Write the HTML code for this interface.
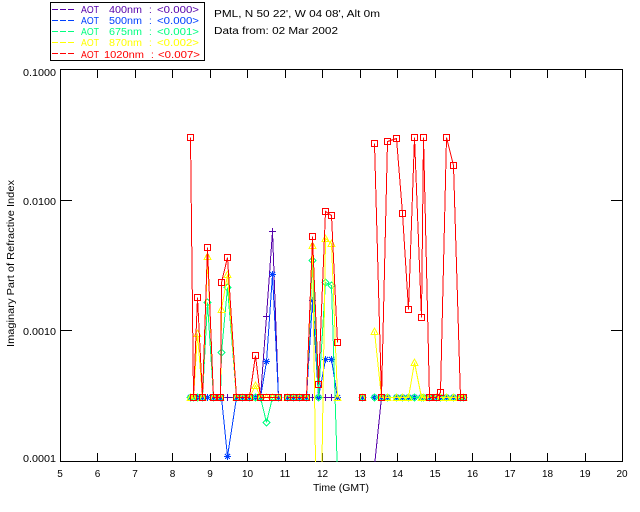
<!DOCTYPE html>
<html>
<head>
<meta charset="utf-8">
<style>
html,body{margin:0;padding:0;background:#fff;width:640px;height:512px;overflow:hidden}
body{position:relative}
svg{display:block;position:absolute;left:0;top:0;overflow:hidden}
text{font-family:"Liberation Sans",sans-serif;font-size:10px;fill:#000}
.x{text-anchor:middle}
.ax{stroke:#000;stroke-width:1;fill:none;shape-rendering:crispEdges}
marker *{shape-rendering:crispEdges}
.s polyline{fill:none;stroke-width:1;shape-rendering:crispEdges}
.p polyline{stroke:#5500aa;marker-start:url(#mp);marker-mid:url(#mp);marker-end:url(#mp)}
.b polyline{stroke:#0040ff;marker-start:url(#mb);marker-mid:url(#mb);marker-end:url(#mb)}
.g polyline{stroke:#00ff80;marker-start:url(#mg);marker-mid:url(#mg);marker-end:url(#mg)}
.y polyline{stroke:#ffff00;marker-start:url(#my);marker-mid:url(#my);marker-end:url(#my)}
.r polyline{stroke:#ff0000;marker-start:url(#mr);marker-mid:url(#mr);marker-end:url(#mr)}
</style>
</head>
<body>
<svg width="640" height="512" viewBox="0 0 640 512" xmlns="http://www.w3.org/2000/svg">
<defs>
<clipPath id="c"><rect x="60" y="69" width="563" height="393"/></clipPath>
<marker id="mp" markerUnits="userSpaceOnUse" markerWidth="12" markerHeight="12" refX="6" refY="6" overflow="visible"><path d="M2.5 6H9.5M6 2.5V9.5" stroke="#5500aa" fill="none"/></marker>
<marker id="mb" markerUnits="userSpaceOnUse" markerWidth="12" markerHeight="12" refX="6" refY="6" overflow="visible"><path d="M2.5 6H9.5M6 2.5V9.5M3.5 3.5L8.5 8.5M8.5 3.5L3.5 8.5" stroke="#0040ff" fill="none"/></marker>
<marker id="mg" markerUnits="userSpaceOnUse" markerWidth="12" markerHeight="12" refX="6" refY="6" overflow="visible"><path d="M6 2.5L9.5 6L6 9.5L2.5 6Z" stroke="#00ff80" fill="none"/></marker>
<marker id="my" markerUnits="userSpaceOnUse" markerWidth="12" markerHeight="12" refX="6" refY="6" overflow="visible"><path d="M6 2.5L9.5 9H2.5Z" stroke="#ffff00" fill="none"/></marker>
<marker id="mr" markerUnits="userSpaceOnUse" markerWidth="12" markerHeight="12" refX="6" refY="6" overflow="visible"><rect x="3" y="3" width="6" height="6" stroke="#ff0000" fill="none"/></marker>
</defs>

<!-- legend -->
<rect class="ax" x="50.5" y="2.5" width="154" height="58"/>
<g shape-rendering="crispEdges" stroke-dasharray="6 2" fill="none">
<path d="M52 9.5H76" stroke="#5500aa"/>
<path d="M52 20.5H76" stroke="#0040ff"/>
<path d="M52 31.5H76" stroke="#00ff80"/>
<path d="M52 42.5H76" stroke="#ffff00"/>
<path d="M52 53.5H76" stroke="#ff0000"/>
</g>
<g style="fill:#5500aa">
<text style="fill:inherit" x="81" y="13" textLength="18" lengthAdjust="spacingAndGlyphs">AOT</text>
<text style="fill:inherit" x="109" y="13" textLength="33" lengthAdjust="spacingAndGlyphs">400nm</text>
<text style="fill:inherit" x="149" y="13">:</text>
<text style="fill:inherit" x="157" y="13" textLength="42" lengthAdjust="spacingAndGlyphs">&lt;0.000&gt;</text>
</g>
<g style="fill:#0040ff">
<text style="fill:inherit" x="81" y="24" textLength="18" lengthAdjust="spacingAndGlyphs">AOT</text>
<text style="fill:inherit" x="109" y="24" textLength="33" lengthAdjust="spacingAndGlyphs">500nm</text>
<text style="fill:inherit" x="149" y="24">:</text>
<text style="fill:inherit" x="157" y="24" textLength="42" lengthAdjust="spacingAndGlyphs">&lt;0.000&gt;</text>
</g>
<g style="fill:#00ff80">
<text style="fill:inherit" x="81" y="35" textLength="18" lengthAdjust="spacingAndGlyphs">AOT</text>
<text style="fill:inherit" x="109" y="35" textLength="33" lengthAdjust="spacingAndGlyphs">675nm</text>
<text style="fill:inherit" x="149" y="35">:</text>
<text style="fill:inherit" x="157" y="35" textLength="42" lengthAdjust="spacingAndGlyphs">&lt;0.001&gt;</text>
</g>
<g style="fill:#ffff00">
<text style="fill:inherit" x="81" y="46" textLength="18" lengthAdjust="spacingAndGlyphs">AOT</text>
<text style="fill:inherit" x="109" y="46" textLength="33" lengthAdjust="spacingAndGlyphs">870nm</text>
<text style="fill:inherit" x="149" y="46">:</text>
<text style="fill:inherit" x="157" y="46" textLength="42" lengthAdjust="spacingAndGlyphs">&lt;0.002&gt;</text>
</g>
<g style="fill:#ff0000">
<text style="fill:inherit" x="81" y="58" textLength="18" lengthAdjust="spacingAndGlyphs">AOT</text>
<text style="fill:inherit" x="104" y="58" textLength="40" lengthAdjust="spacingAndGlyphs">1020nm</text>
<text style="fill:inherit" x="151" y="58">:</text>
<text style="fill:inherit" x="158" y="58" textLength="42" lengthAdjust="spacingAndGlyphs">&lt;0.007&gt;</text>
</g>

<text x="214" y="17" textLength="166" lengthAdjust="spacingAndGlyphs">PML, N 50 22', W 04 08', Alt 0m</text>
<text x="214" y="34" textLength="124" lengthAdjust="spacingAndGlyphs">Data from: 02 Mar 2002</text>

<!-- axes -->
<rect class="ax" x="60.5" y="69.5" width="562" height="392"/>
<path class="ax" d="M97.5 70V78M135.5 70V78M172.5 70V78M210.5 70V78M247.5 70V78M285.5 70V78M322.5 70V78M360.5 70V78M397.5 70V78M435.5 70V78M472.5 70V78M510.5 70V78M547.5 70V78M585.5 70V78
M97.5 461V453M135.5 461V453M172.5 461V453M210.5 461V453M247.5 461V453M285.5 461V453M322.5 461V453M360.5 461V453M397.5 461V453M435.5 461V453M472.5 461V453M510.5 461V453M547.5 461V453M585.5 461V453
M61 200.5H72M61 330.5H72M622 200.5H611M622 330.5H611"/>

<text x="23" y="76" textLength="33" lengthAdjust="spacingAndGlyphs">0.1000</text>
<text x="23" y="205" textLength="33" lengthAdjust="spacingAndGlyphs">0.0100</text>
<text x="23" y="335" textLength="33" lengthAdjust="spacingAndGlyphs">0.0010</text>
<text x="23" y="462" textLength="33" lengthAdjust="spacingAndGlyphs">0.0001</text>

<g>
<text class="x" x="60" y="477">5</text>
<text class="x" x="97.5" y="477">6</text>
<text class="x" x="135" y="477">7</text>
<text class="x" x="172.5" y="477">8</text>
<text class="x" x="210" y="477">9</text>
<text class="x" x="247.5" y="477">10</text>
<text class="x" x="285" y="477">11</text>
<text class="x" x="322.5" y="477">12</text>
<text class="x" x="360" y="477">13</text>
<text class="x" x="397.5" y="477">14</text>
<text class="x" x="435" y="477">15</text>
<text class="x" x="472.5" y="477">16</text>
<text class="x" x="510" y="477">17</text>
<text class="x" x="547.5" y="477">18</text>
<text class="x" x="585" y="477">19</text>
<text class="x" x="622" y="477">20</text>
</g>
<text x="313" y="491" textLength="56" lengthAdjust="spacingAndGlyphs">Time (GMT)</text>
<text transform="translate(14 347) rotate(-90)" x="0" y="0" textLength="167" lengthAdjust="spacingAndGlyphs">Imaginary Part of Refractive Index</text>

<!-- data -->
<g clip-path="url(#c)">
<g transform="translate(.5 .5)">
<g class="s p">
<polyline points="190,397 193,397 197,397 202,397 207,397 213,397 220,397 221,397 227,397 236,397 242,397 249,397 255,397 260,397 266,316 272,231 278,397"/>
<polyline points="287,397 293,397 299,397 306,397 312,397 318,397 325,397 331,397 337,397"/>
<polyline points="362,397 362,397"/>
<polyline points="373,475 381,397 387,397 396,397 402,397 408,397 414,397 421,397 423,397 429,397 436,397 440,397 446,397 453,397 460,397 463,397"/>
</g>
<g class="s b">
<polyline points="190,397 193,397 197,397 202,397 207,397 213,397 220,397 221,397 227,456 236,397 242,397 249,397 255,397 260,397 266,361 272,274 278,397"/>
<polyline points="287,397 293,397 299,397 306,397 312,300 318,397 325,359 331,359 337,397"/>
<polyline points="362,397 362,397"/>
<polyline points="374,397 381,397 387,397 396,397 402,397 408,397 414,397 421,397 423,397 429,397 436,397 440,397 446,397 453,397 460,397 463,397"/>
</g>
<g class="s g">
<polyline points="190,397 193,397 197,397 202,397 207,302 213,397 220,397 221,352 227,287 236,397 242,397 249,397 255,397 260,397 266,422 272,397 278,397"/>
<polyline points="287,397 293,397 299,397 306,397 312,260 318,397 325,282 331,285 337.5,490"/>
<polyline points="362,397 362,397"/>
<polyline points="374,397 381,397 387,397 396,397 402,397 408,397 414,397 421,397 423,397 429,397 436,397 440,397 446,397 453,397 460,397 463,397"/>
</g>
<g class="s y">
<polyline points="190,397 193,397 197,333 202,397 207,256 213,397 220,397 221,309 227,274 236,397 242,397 249,397 255,385 260,397 266,397 272,397 278,397"/>
<polyline points="287,397 293,397 299,397 306,397 312,245 315.6,505 320.8,505 325,238 331,243 337,397"/>
<polyline points="362,397 362,397"/>
<polyline points="374,331 381,397 387,397 396,397 402,397 408,397 414,362 421,397 423,397 429,397 436,397 440,397 446,397 453,397 460,397 463,397"/>
</g>
<g class="s r">
<polyline points="190,137 193,397 197,297 202,397 207,247 213,397 220,397 221,282 227,257 236,397 242,397 249,397 255,355 260,397 266,397 272,397 278,397"/>
<polyline points="287,397 293,397 299,397 306,397 312,236 318,384 325,211 331,215 337,342"/>
<polyline points="362,397 362,397"/>
<polyline points="374,143 381,397 387,141 396,138 402,213 408,309 414,137 421,317 423,137 429,397 436,397 440,392 446,137 453,165 460,397 463,397"/>
</g>
</g>
</g>
</svg>
</body>
</html>
